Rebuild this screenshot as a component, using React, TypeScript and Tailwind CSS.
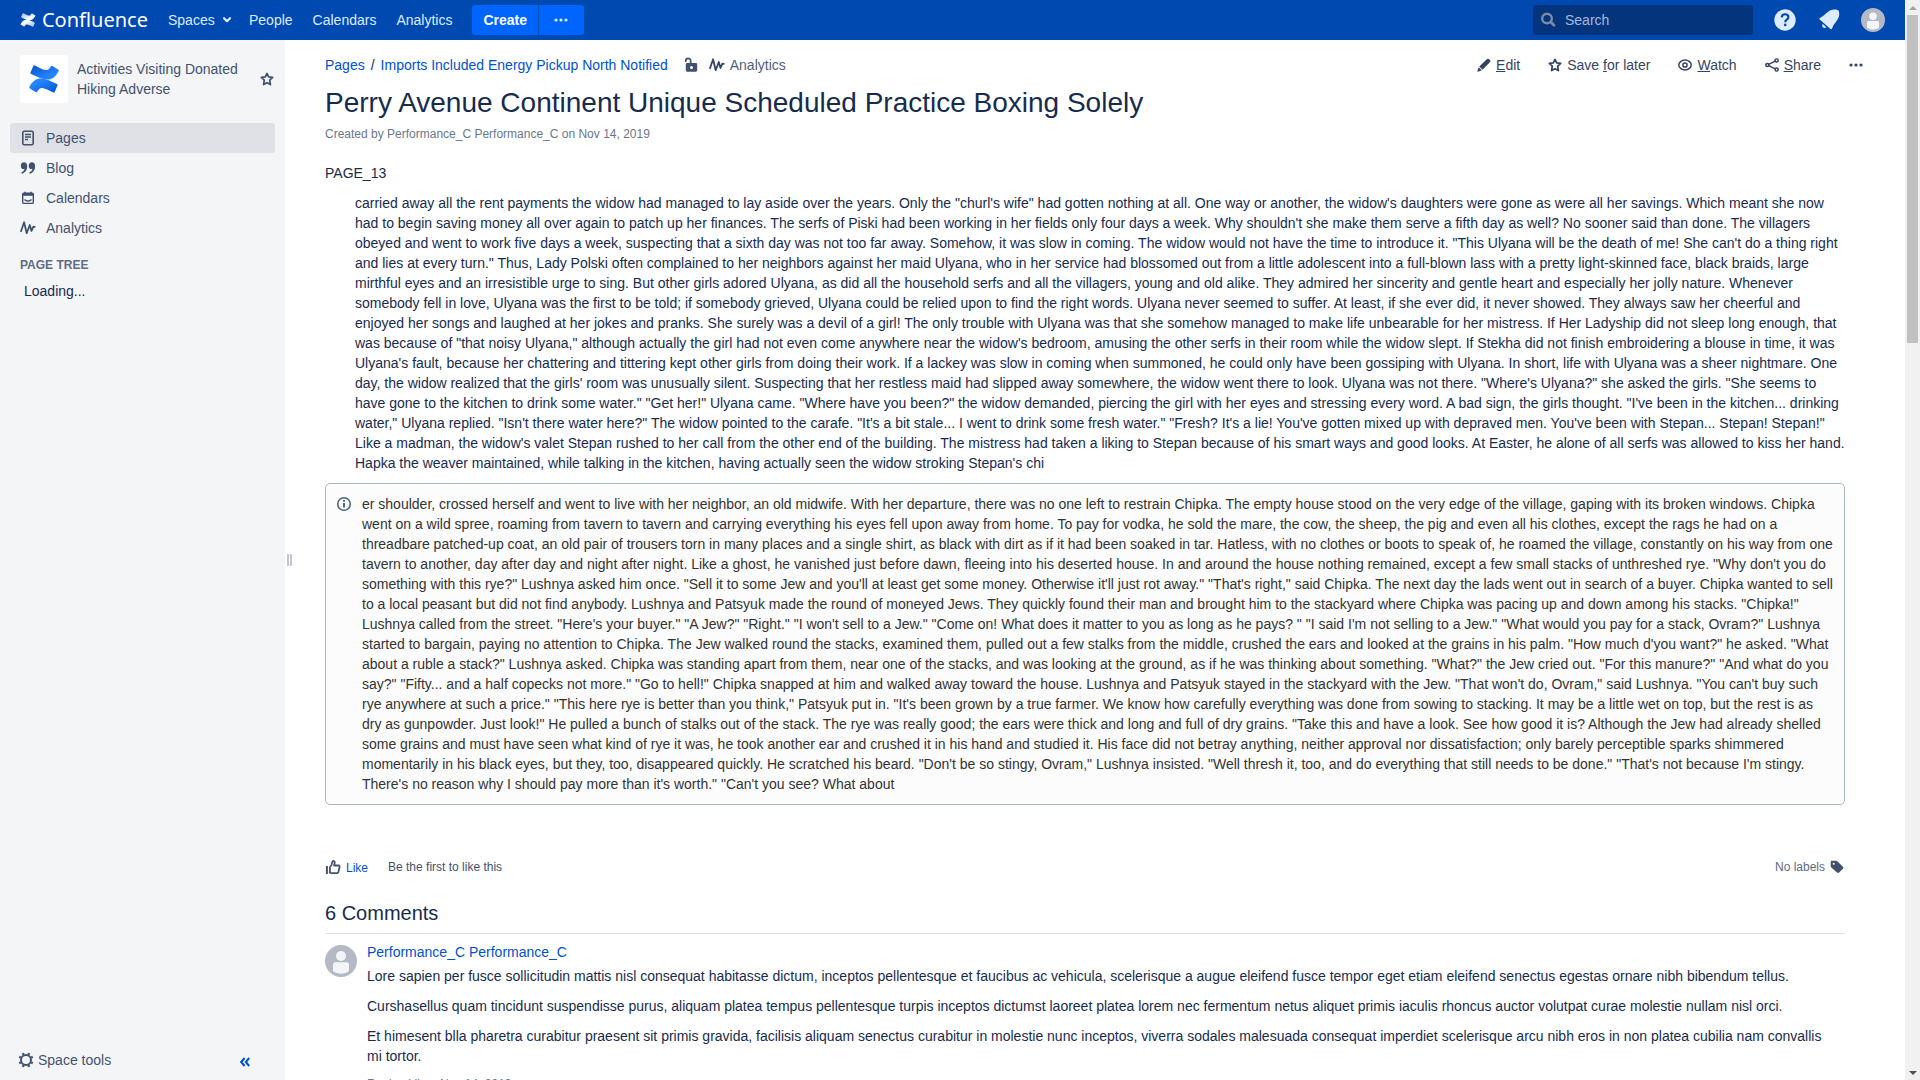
import React from "react";

const story =
  "carried away all the rent payments the widow had managed to lay aside over the years. Only the \"churl's wife\" had gotten nothing at all. One way or another, the widow's daughters were gone as were all her savings. Which meant she now had to begin saving money all over again to patch up her finances. The serfs of Piski had been working in her fields only four days a week. Why shouldn't she make them serve a fifth day as well? No sooner said than done. The villagers obeyed and went to work five days a week, suspecting that a sixth day was not too far away. Somehow, it was slow in coming. The widow would not have the time to introduce it. \"This Ulyana will be the death of me! She can't do a thing right and lies at every turn.\" Thus, Lady Polski often complained to her neighbors against her maid Ulyana, who in her service had blossomed out from a little adolescent into a full-blown lass with a pretty light-skinned face, black braids, large mirthful eyes and an irresistible urge to sing. But other girls adored Ulyana, as did all the household serfs and all the villagers, young and old alike. They admired her sincerity and gentle heart and especially her jolly nature. Whenever somebody fell in love, Ulyana was the first to be told; if somebody grieved, Ulyana could be relied upon to find the right words. Ulyana never seemed to suffer. At least, if she ever did, it never showed. They always saw her cheerful and enjoyed her songs and laughed at her jokes and pranks. She surely was a devil of a girl! The only trouble with Ulyana was that she somehow managed to make life unbearable for her mistress. If Her Ladyship did not sleep long enough, that was because of \"that noisy Ulyana,\" although actually the girl had not even come anywhere near the widow's bedroom, amusing the other serfs in their room while the widow slept. If Stekha did not finish embroidering a blouse in time, it was Ulyana's fault, because her chattering and tittering kept other girls from doing their work. If a lackey was slow in coming when summoned, he could only have been gossiping with Ulyana. In short, life with Ulyana was a sheer nightmare. One day, the widow realized that the girls' room was unusually silent. Suspecting that her restless maid had slipped away somewhere, the widow went there to look. Ulyana was not there. \"Where's Ulyana?\" she asked the girls. \"She seems to have gone to the kitchen to drink some water.\" \"Get her!\" Ulyana came. \"Where have you been?\" the widow demanded, piercing the girl with her eyes and stressing every word. A bad sign, the girls thought. \"I've been in the kitchen... drinking water,\" Ulyana replied. \"Isn't there water here?\" The widow pointed to the carafe. \"It's a bit stale... I went to drink some fresh water.\" \"Fresh? It's a lie! You've gotten mixed up with depraved men. You've been with Stepan... Stepan! Stepan!\" Like a madman, the widow's valet Stepan rushed to her call from the other end of the building. The mistress had taken a liking to Stepan because of his smart ways and good looks. At Easter, he alone of all serfs was allowed to kiss her hand. Hapka the weaver maintained, while talking in the kitchen, having actually seen the widow stroking Stepan's chi";

const note =
  "er shoulder, crossed herself and went to live with her neighbor, an old midwife. With her departure, there was no one left to restrain Chipka. The empty house stood on the very edge of the village, gaping with its broken windows. Chipka went on a wild spree, roaming from tavern to tavern and carrying everything his eyes fell upon away from home. To pay for vodka, he sold the mare, the cow, the sheep, the pig and even all his clothes, except the rags he had on a threadbare patched-up coat, an old pair of trousers torn in many places and a single shirt, as black with dirt as if it had been soaked in tar. Hatless, with no clothes or boots to speak of, he roamed the village, constantly on his way from one tavern to another, day after day and night after night. Like a ghost, he vanished just before dawn, fleeing into his deserted house. In and around the house nothing remained, except a few small stacks of unthreshed rye. \"Why don't you do something with this rye?\" Lushnya asked him once. \"Sell it to some Jew and you'll at least get some money. Otherwise it'll just rot away.\" \"That's right,\" said Chipka. The next day the lads went out in search of a buyer. Chipka wanted to sell to a local peasant but did not find anybody. Lushnya and Patsyuk made the round of moneyed Jews. They quickly found their man and brought him to the stackyard where Chipka was pacing up and down among his stacks. \"Chipka!\" Lushnya called from the street. \"Here's your buyer.\" \"A Jew?\" \"Right.\" \"I won't sell to a Jew.\" \"Come on! What does it matter to you as long as he pays? \" \"I said I'm not selling to a Jew.\" \"What would you pay for a stack, Ovram?\" Lushnya started to bargain, paying no attention to Chipka. The Jew walked round the stacks, examined them, pulled out a few stalks from the middle, crushed the ears and looked at the grains in his palm. \"How much d'you want?\" he asked. \"What about a ruble a stack?\" Lushnya asked. Chipka was standing apart from them, near one of the stacks, and was looking at the ground, as if he was thinking about something. \"What?\" the Jew cried out. \"For this manure?\" \"And what do you say?\" \"Fifty... and a half copecks not more.\" \"Go to hell!\" Chipka snapped at him and walked away toward the house. Lushnya and Patsyuk stayed in the stackyard with the Jew. \"That won't do, Ovram,\" said Lushnya. \"You can't buy such rye anywhere at such a price.\" \"This here rye is better than you think,\" Patsyuk put in. \"It's been grown by a true farmer. We know how carefully everything was done from sowing to stacking. It may be a little wet on top, but the rest is as dry as gunpowder. Just look!\" He pulled a bunch of stalks out of the stack. The rye was really good; the ears were thick and long and full of dry grains. \"Take this and have a look. See how good it is? Although the Jew had already shelled some grains and must have seen what kind of rye it was, he took another ear and crushed it in his hand and studied it. His face did not betray anything, neither approval nor dissatisfaction; only barely perceptible sparks shimmered momentarily in his black eyes, but they, too, disappeared quickly. He scratched his beard. \"Don't be so stingy, Ovram,\" Lushnya insisted. \"Well thresh it, too, and do everything that still needs to be done.\" \"That's not because I'm stingy. There's no reason why I should pay more than it's worth.\" \"Can't you see? What about";

const comments = [
  "Lore sapien per fusce sollicitudin mattis nisl consequat habitasse dictum, inceptos pellentesque et faucibus ac vehicula, scelerisque a augue eleifend fusce tempor eget etiam eleifend senectus egestas ornare nibh bibendum tellus.",
  "Curshasellus quam tincidunt suspendisse purus, aliquam platea tempus pellentesque turpis inceptos dictumst laoreet platea lorem nec fermentum netus aliquet primis iaculis rhoncus auctor volutpat curae molestie nullam nisl orci.",
  "Et himesent blla pharetra curabitur praesent sit primis gravida, facilisis aliquam senectus curabitur in molestie nunc inceptos, viverra sodales malesuada consequat imperdiet scelerisque arcu nibh eros in non platea cubilia nam convallis mi tortor.",
];

type IconProps = { className?: string };

const MARK_TOP =
  "M23.3 6.2c.25-.42.1-.95-.32-1.2L18.6 2.3a.87.87 0 0 0-1.2.3c-2 3.3-3.2 3.6-7.6 1.5L5.2 1.9a.87.87 0 0 0-1.16.44L1.9 7.2c-.2.43 0 .95.43 1.15 1 .46 2.9 1.37 4.7 2.2 6.9 3.35 12.6 3.1 16.27-4.35z";
const MARK_BOTTOM =
  "M1.1 18.2c-.25.42-.1.95.32 1.2l4.4 2.7c.41.25.94.12 1.2-.3 2-3.3 3.2-3.6 7.6-1.5l4.6 2.2c.44.2.95 0 1.16-.44l2.1-4.85c.2-.43 0-.95-.43-1.15-1-.46-2.9-1.37-4.7-2.2C10.5 10.5 4.8 10.7 1.1 18.2z";

function Mark({ id, dark, light, className }: IconProps & { id: string; dark: string; light: string }) {
  return (
    <svg viewBox="0 0 24.4 24.4" className={className} aria-hidden="true">
      <defs>
        <linearGradient id={id + "a"} x1="0" y1="0" x2="1" y2="1">
          <stop offset="0" stopColor={dark} />
          <stop offset="0.7" stopColor={light} />
        </linearGradient>
        <linearGradient id={id + "b"} x1="1" y1="1" x2="0" y2="0">
          <stop offset="0" stopColor={dark} />
          <stop offset="0.7" stopColor={light} />
        </linearGradient>
      </defs>
      <path d={MARK_TOP} fill={`url(#${id}a)`} />
      <path d={MARK_BOTTOM} fill={`url(#${id}b)`} />
    </svg>
  );
}

const Star = ({ className }: IconProps) => (
  <svg viewBox="0 0 16 16" className={className} fill="none" stroke="currentColor" strokeWidth="2" strokeLinejoin="round" aria-hidden="true">
    <path d="M8 1.700l1.900 3.900 4.600.6-3.400 3.100.8 5.100L8 12.200l-3.900 2.200.8-5.100L1.500 6.200l4.600-.6z" />
  </svg>
);

const Wave = ({ className }: IconProps) => (
  <svg viewBox="0 0 16 14" className={className} fill="none" stroke="currentColor" strokeWidth="1.800" strokeLinejoin="round" strokeLinecap="round" aria-hidden="true">
    <path d="M1 10.200L4.100 1.300l2.600 10.900L9.800 4l1.700 6 1.900-4.300 1.400.1" />
  </svg>
);

const Dots = ({ className }: IconProps) => (
  <svg viewBox="0 0 14 4" className={className} fill="currentColor" aria-hidden="true">
    <circle cx="2" cy="2" r="1.600" />
    <circle cx="7" cy="2" r="1.600" />
    <circle cx="12" cy="2" r="1.600" />
  </svg>
);

const PageIcon = ({ className }: IconProps) => (
  <svg viewBox="0 0 16 16" className={className} fill="none" stroke="currentColor" aria-hidden="true">
    <rect x="2.800" y="1.300" width="10.400" height="13.400" rx="1.400" strokeWidth="1.600" />
    <path d="M5 4.500h6M5 7h6M5 9.500h3" strokeWidth="1.300" />
  </svg>
);

const QuoteIcon = ({ className }: IconProps) => (
  <svg viewBox="0 0 16 16" className={className} fill="currentColor" aria-hidden="true">
    <path d="M4 2.200c2 0 3.200 1.500 3.200 4.100 0 4-2.300 6.800-5.400 7.500l-.5-1.300c1.900-.7 3-2 3.200-3.700-.3.200-.7.300-1.100.3C1.900 9.100.8 7.800.8 5.700.8 3.600 2.100 2.200 4 2.200z" />
    <path d="M11.900 2.200c2 0 3.200 1.500 3.200 4.100 0 4-2.300 6.800-5.400 7.500l-.5-1.300c1.900-.7 3-2 3.200-3.700-.3.200-.7.300-1.100.3-1.500 0-2.600-1.300-2.600-3.400 0-2.100 1.300-3.500 3.200-3.500z" />
  </svg>
);

const CalendarIcon = ({ className }: IconProps) => (
  <svg viewBox="0 0 16 16" className={className} fill="none" stroke="currentColor" aria-hidden="true">
    <rect x="2.700" y="3.200" width="10.600" height="10.200" rx="1" strokeWidth="1.400" />
    <path d="M2.500 4.600h11" strokeWidth="2.400" />
    <path d="M5 1.800v2M11 1.800v2" strokeWidth="1.600" />
    <path d="M4.500 9.500c1.500 2 5.500 2 7 0" strokeWidth="1.300" />
  </svg>
);

const PencilIcon = ({ className }: IconProps) => (
  <svg viewBox="0 0 16 16" className={className} fill="currentColor" aria-hidden="true">
    <path d="M10.300 2.200l1.400-1.200c.5-.4 1.300-.3 1.800.1l1.500 1.500c.5.500.5 1.300.1 1.800l-1.200 1.400L6.300 13.400 2.600 9.700zM2 10.500l3.500 3.500-4.300 1.600c-.4.100-.9-.3-.8-.8z" />
  </svg>
);

const EyeIcon = ({ className }: IconProps) => (
  <svg viewBox="0 0 16 16" className={className} fill="none" stroke="currentColor" strokeWidth="1.700" aria-hidden="true">
    <path d="M.9 8c0-2.800 3.100-5.600 7.100-5.600s7.100 2.800 7.100 5.600-3.100 5.600-7.100 5.600S.9 10.800.9 8z" />
    <circle cx="8" cy="8" r="2.400" />
  </svg>
);

const ShareIcon = ({ className }: IconProps) => (
  <svg viewBox="0 0 16 16" className={className} fill="none" stroke="currentColor" strokeWidth="1.700" aria-hidden="true">
    <circle cx="2.700" cy="8" r="1.800" />
    <circle cx="13.300" cy="2.800" r="1.800" />
    <circle cx="13.300" cy="13.200" r="1.800" />
    <path d="M4.200 7.300l7.500-3.700M4.200 8.700l7.500 3.700" />
  </svg>
);

const UnlockIcon = ({ className }: IconProps) => (
  <svg viewBox="0 0 14 16" className={className} aria-hidden="true">
    <path d="M1.700 5V3.900a2.500 2.500 0 0 1 5 0V7" fill="none" stroke="currentColor" strokeWidth="1.700" />
    <path fillRule="evenodd" d="M3.200 6.100h8.600c.8 0 1.400.6 1.400 1.400v5.800c0 .8-.6 1.400-1.400 1.400H3.200c-.8 0-1.400-.6-1.400-1.400V7.500c0-.8.6-1.400 1.400-1.400zM7.500 9.100a1.500 1.500 0 1 0 0 3 1.500 1.500 0 0 0 0-3z" fill="currentColor" />
  </svg>
);

const GearIcon = ({ className }: IconProps) => (
  <svg viewBox="0 0 16 16" className={className} fill="none" stroke="currentColor" aria-hidden="true">
    <circle cx="8" cy="8" r="5" strokeWidth="2" />
    <path d="M5.500 2.800L4.900 1.200M10.500 2.800l.6-1.600M5.500 13.200l-.6 1.600M10.500 13.200l.6 1.600M2.800 5.500l-1.600-.6M2.800 10.500l-1.600.6M13.200 5.500l1.600-.6M13.200 10.500l1.600.6" strokeWidth="2.400" />
  </svg>
);

const ThumbIcon = ({ className }: IconProps) => (
  <svg viewBox="0 0 16 16" className={className} fill="none" stroke="currentColor" strokeLinejoin="round" aria-hidden="true">
    <path d="M1.900 7v8" strokeWidth="2" />
    <path d="M4.900 13.800V8.300c1.700-1.500 2.200-3.300 2.400-5.300.1-1.600 2.400-1.600 2.400.3 0 1.300-.3 2.200-.6 3.200h4.400c.8 0 1.300.7 1.100 1.500l-1.200 5c-.2.700-.6 1.100-1.300 1.100H6.300c-.6 0-1-.1-1.400-.3z" strokeWidth="1.800" />
  </svg>
);

const TagIcon = ({ className }: IconProps) => (
  <svg viewBox="0 0 14 14" className={className} aria-hidden="true">
    <path fillRule="evenodd" fill="currentColor" d="M2 .8h4c.5 0 .9.200 1.300.5l5.600 5.400c.6.600.6 1.400 0 2l-3.800 3.900c-.6.600-1.400.600-2 0L1.300 7.400C.9 7 .7 6.600.7 6.100V2.100C.7 1.300 1.200.8 2 .8zM3.700 2.700a1 1 0 1 0 0 2 1 1 0 0 0 0-2z" />
  </svg>
);

const Avatar = ({ className }: IconProps) => (
  <svg viewBox="0 0 32 32" className={className} role="img" aria-label="Performance_C">
    <circle cx="16" cy="16" r="16" fill="#b3bac5" />
    <circle cx="16" cy="11" r="5" fill="#f4f5f7" />
    <path d="M8 19.500c0-1.400.9-2.300 2.300-2.300h11.400c1.400 0 2.300.9 2.300 2.300V26c-4 3.600-12 3.600-16 0z" fill="#f4f5f7" />
  </svg>
);

function Header() {
  return (
    <header className="flex h-10 shrink-0 items-center bg-[#0049b0] px-5 text-[#deebff]">
      <a href="#home" className="flex w-32 items-center gap-1.5 text-white">
        <Mark id="logo" className="size-4" dark="#9dbbe6" light="#ffffff" />
        <span className="font-['Noto_Sans',sans-serif] text-[20px] leading-6">Confluence</span>
      </a>
      <nav className="ml-5 flex items-center">
        <button className="flex w-[81px] items-center gap-[7px]">
          Spaces
          <svg viewBox="0 0 10 8" className="h-2 w-2.5" fill="none" stroke="currentColor" strokeWidth="2.200" strokeLinecap="round" strokeLinejoin="round" aria-hidden="true">
            <path d="M2 2.200l3 3 3-3" />
          </svg>
        </button>
        <a href="#people" className="mr-5">People</a>
        <a href="#calendars" className="mr-5">Calendars</a>
        <a href="#analytics" className="mr-5">Analytics</a>
        <button className="h-[30px] rounded-l-[3px] bg-[#0065ff] px-[11px] font-bold text-white">Create</button>
        <button aria-label="Create from template" className="ml-px flex h-[30px] w-[45px] items-center justify-center rounded-r-[3px] bg-[#0065ff] pr-0.5">
          <Dots className="h-1 w-3.5" />
        </button>
      </nav>
      <label className="ml-auto flex h-[30px] w-[220px] items-center gap-2 rounded-[3px] bg-[#04357c] px-2">
        <svg viewBox="0 0 16 16" className="size-4 shrink-0 text-[#7a8ba8]" fill="none" stroke="currentColor" aria-hidden="true">
          <circle cx="6" cy="6.500" r="4.800" strokeWidth="2.400" />
          <path d="M10 10.300l3 3" strokeWidth="2.800" strokeLinecap="round" />
        </svg>
        <input type="text" aria-label="Search" placeholder="Search" className="w-full bg-transparent outline-none placeholder:text-[#a3b9dc]" />
      </label>
      <button aria-label="Help" className="ml-[21px]">
        <svg viewBox="0 0 22 22" className="block size-[22px]" aria-hidden="true">
          <circle cx="11" cy="11" r="10.700" fill="#deebff" />
          <path d="M7.800 8.500c0-2 1.400-3.200 3.300-3.200s3.300 1.200 3.300 2.900c0 2.500-3.200 2.500-3.200 5" fill="none" stroke="#0049b0" strokeWidth="2.100" />
          <circle cx="11.200" cy="15.900" r="1.300" fill="#0049b0" />
        </svg>
      </button>
      <button aria-label="Notifications" className="ml-[22px]">
        <svg viewBox="0 0 22 22" className="block size-[22px]" fill="#deebff" aria-hidden="true">
          <path d="M12 1.500c2.500-1.300 5.500-1.300 7.500-.6.900.300 1.100.7 1.400 1.600.7 2.300.300 5-.9 7.300-2 3.800-4.700 5.700-5.900 9.400-.3.900-1.200 1.300-1.900.600L1.700 10.500c-.7-.8-.300-1.500.6-1.800C6 7.300 8.200 3.500 12 1.500z" />
          <path d="M4.800 14.900l3.500 3.400c-1 .9-2.500.8-3.400-.1-.9-.9-.9-2.300-.1-3.300z" />
        </svg>
      </button>
      <button aria-label="Profile" className="ml-[21px]">
        <Avatar className="block size-6" />
      </button>
    </header>
  );
}

const navItems = [
  { label: "Pages", Icon: PageIcon, active: true },
  { label: "Blog", Icon: QuoteIcon, active: false },
  { label: "Calendars", Icon: CalendarIcon, active: false },
  { label: "Analytics", Icon: Wave, active: false },
];

function Sidebar() {
  return (
    <aside className="flex w-[285px] shrink-0 flex-col bg-[#f4f5f7] text-[#42526e]">
      <div className="flex items-center pt-[15px] pr-[11px] pl-5">
        <a href="#space" className="flex size-12 shrink-0 items-center justify-center rounded-[3px] bg-white" aria-label="Space home">
          <Mark id="space" className="size-[32px]" dark="#0052cc" light="#2684ff" />
        </a>
        <a href="#space" className="ml-[9px] flex-1">Activities Visiting Donated Hiking Adverse</a>
        <button aria-label="Favourite space" className="ml-2">
          <Star className="block size-3.5" />
        </button>
      </div>
      <nav className="mt-5 px-2.5">
        {navItems.map(({ label, Icon, active }) => (
          <a
            key={label}
            href={"#" + label}
            className={
              active
                ? "flex h-[30px] items-center gap-2.5 rounded-[3px] bg-[#dfe1e6] px-2.5"
                : "flex h-[30px] items-center gap-2.5 rounded-[3px] px-2.5"
            }
          >
            <Icon className="size-4" />
            {label}
          </a>
        ))}
      </nav>
      <h2 className="mt-3 px-5 text-xs leading-[20px] font-bold text-[#5e6c84]">PAGE TREE</h2>
      <p className="mt-1.5 px-6 text-[#172b4d]">Loading...</p>
      <div className="mt-auto flex h-10 items-center justify-between pr-[35px] pl-[18px]">
        <button className="flex items-center gap-1">
          <GearIcon className="size-4" />
          Space tools
        </button>
        <button aria-label="Collapse sidebar" className="text-[#0052cc]">
          <svg viewBox="0 0 10 10" className="mt-1 block size-2.5" fill="none" stroke="currentColor" strokeWidth="2" aria-hidden="true">
            <path d="M4.600 1L1.200 5l3.400 4M9.200 1L5.800 5l3.400 4" />
          </svg>
        </button>
      </div>
    </aside>
  );
}

function Toolbar() {
  return (
    <div className="flex items-center text-[#344563]">
      <a href="#edit" className="mr-7 flex items-center gap-[5px]">
        <PencilIcon className="size-3.5" />
        <span><u>E</u>dit</span>
      </a>
      <button className="mr-7 flex items-center gap-[5px]">
        <Star className="size-3.5" />
        <span>Save <u>f</u>or later</span>
      </button>
      <button className="mr-7 flex items-center gap-[5px]">
        <EyeIcon className="size-3.5" />
        <span><u>W</u>atch</span>
      </button>
      <button className="mr-7 flex items-center gap-[5px]">
        <ShareIcon className="size-3.5" />
        <span><u>S</u>hare</span>
      </button>
      <button aria-label="More actions">
        <Dots className="h-1 w-3.5" />
      </button>
    </div>
  );
}

function Content() {
  return (
    <main className="min-w-0 flex-1 overflow-hidden pt-[15px] pr-[60px] pl-[26px] text-[#172b4d]">
      <div className="-mr-[18px] flex items-center justify-between">
        <div className="flex items-center">
          <a href="#pages" className="text-[#0052cc]">Pages</a>
          <span className="px-1.5">/</span>
          <a href="#parent" className="text-[#0052cc]">Imports Included Energy Pickup North Notified</a>
          <button aria-label="Unrestricted" className="ml-4 text-[#42526e]">
            <UnlockIcon className="block h-4 w-3.5" />
          </button>
          <a href="#stats" className="ml-[11px] flex items-center gap-[5px] text-[#505f79]">
            <Wave className="h-3.5 w-4 text-[#344563]" />
            Analytics
          </a>
        </div>
        <Toolbar />
      </div>
      <h1 className="mt-[11px] text-[28px] leading-[34px]">Perry Avenue Continent Unique Scheduled Practice Boxing Solely</h1>
      <p className="mt-1 text-xs leading-[20px] text-[#6b778c]">Created by Performance_C Performance_C on Nov 14, 2019</p>

      <p className="mt-[19px]">PAGE_13</p>
      <p className="mt-2.5 pl-[30px]">{story}</p>
      <div className="mt-2.5 flex rounded-[5px] border border-[#aab8c6] bg-[#fcfcfc] p-2.5 text-[#333333]">
        <svg viewBox="0 0 16 16" className="mt-0.5 mr-2.5 size-4 shrink-0" fill="none" stroke="#4a6785" aria-hidden="true">
          <circle cx="8" cy="8" r="6.300" strokeWidth="1.600" />
          <path d="M8 7v4.600" strokeWidth="2" />
          <path d="M8 4v1.800" strokeWidth="2" />
        </svg>
        <p>{note}</p>
      </div>

      <div className="mt-[51px] flex h-[22px] items-center text-xs text-[#42526e]">
        <button className="flex items-center gap-[5px] text-[#0052cc]">
          <ThumbIcon className="size-4 text-[#42526e]" />
          <span className="pt-0.5">Like</span>
        </button>
        <span className="ml-5">Be the first to like this</span>
        <span className="ml-auto text-[#5e6c84]">No labels</span>
        <button aria-label="Edit labels" className="mr-px ml-[5px]">
          <TagIcon className="block size-3.5" />
        </button>
      </div>

      <section>
        <h2 className="mt-[23px] border-b border-[#dfe1e6] pb-2 text-[20px] leading-6">6 Comments</h2>
        <article className="flex gap-2.5 pt-[11px]">
          <Avatar className="size-8 shrink-0" />
          <div className="-mt-[3px] pr-5">
            <a href="#author" className="text-[#0052cc]">Performance_C Performance_C</a>
            <div className="mt-1 flex flex-col gap-2.5">
              {comments.map((text) => (
                <p key={text}>{text}</p>
              ))}
            </div>
            <div className="mt-2 flex text-xs leading-[20px] text-[#6b778c]">
              <a href="#reply">Reply</a>
              <span className="px-[3px]">•</span>
              <a href="#like">Like</a>
              <span className="px-[3px]">•</span>
              <a href="#date">Nov 14, 2019</a>
            </div>
          </div>
        </article>
      </section>
    </main>
  );
}

export default function App() {
  return (
    <div className="flex h-screen overflow-hidden bg-white font-['Liberation_Sans',sans-serif] text-sm leading-[20px]">
      <div className="flex min-w-0 flex-1 flex-col">
        <Header />
        <div className="flex min-h-0 flex-1">
          <Sidebar />
          <div className="flex w-3.5 shrink-0 items-center pl-0.5">
            <div className="h-3 w-[5px] border-x-2 border-[#c1c7d0]" />
          </div>
          <Content />
        </div>
      </div>
      <div className="flex w-[15px] shrink-0 flex-col items-center justify-between bg-[#f1f1f1]" aria-hidden="true">
        <div className="flex w-full flex-col items-center">
          <div className="flex h-[15px] items-center">
            <svg viewBox="0 0 8 4" className="h-1 w-2" fill="#a3a3a3"><path d="M0 4l4-4 4 4z" /></svg>
          </div>
          <div className="h-[328px] w-[11px] bg-[#c1c1c1]" />
        </div>
        <div className="flex h-[15px] items-center">
          <svg viewBox="0 0 8 4" className="h-1 w-2" fill="#505050"><path d="M0 0l4 4 4-4z" /></svg>
        </div>
      </div>
    </div>
  );
}
